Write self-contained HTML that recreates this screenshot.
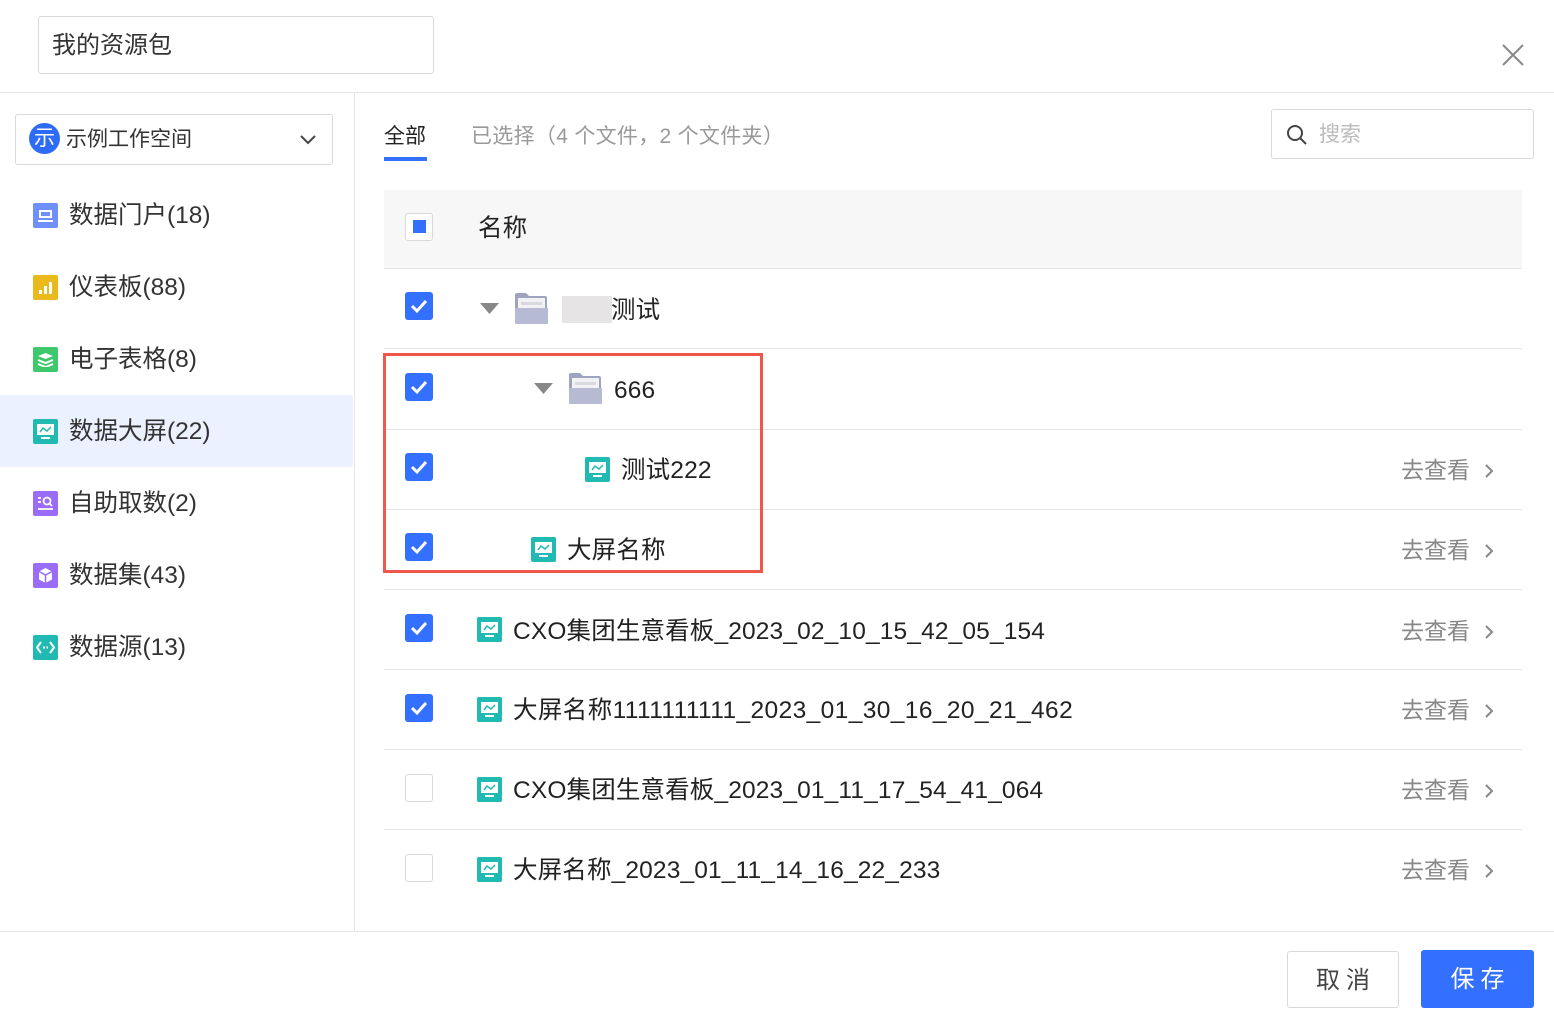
<!DOCTYPE html>
<html><head><meta charset="utf-8"><style>
*{box-sizing:border-box;margin:0;padding:0}
body{width:1554px;height:1012px;background:#fff;position:relative;overflow:hidden;font-family:"Liberation Sans","Noto Sans CJK SC",sans-serif;color:#333}
.a{position:absolute}
.hl{position:absolute;background:#e6e6e6;height:1px}
.cb{position:absolute;left:405px;width:28px;height:28px;border-radius:3px;background:#3370ff}
.cb svg{position:absolute;left:5px;top:6px}
.cbe{position:absolute;left:405px;width:28px;height:28px;border-radius:3px;border:1px solid #d9d9d9;background:#fff}
.t{position:absolute;font-size:24.5px;line-height:30px;color:#222;white-space:nowrap;letter-spacing:0.15px}
.go{position:absolute;left:1401px;font-size:23px;line-height:30px;color:#888;white-space:nowrap}
.go svg{position:absolute;left:83px;top:8px}
.ic{position:absolute;width:25px;height:25px;border-radius:2px;background:#20bab2}
.si{position:absolute;left:33px;width:25px;height:25px;border-radius:2px}
.sl{position:absolute;left:69px;font-size:24.5px;line-height:30px;color:#333}
</style></head><body>
<!-- header -->
<div class="a" style="left:38px;top:16px;width:396px;height:58px;border:1px solid #d9d9d9;border-radius:3px"></div>
<div class="a" style="left:52px;top:31px;font-size:24px;line-height:30px;color:#333">我的资源包</div>
<svg class="a" style="left:1502px;top:44px" width="22" height="22" viewBox="0 0 22 22"><path d="M1 1L21 21M21 1L1 21" stroke="#888" stroke-width="2"/></svg>
<div class="hl" style="left:0;top:92px;width:1554px"></div>
<!-- sidebar -->
<div class="a" style="left:354px;top:93px;width:1px;height:838px;background:#e6e6e6"></div>
<div class="a" style="left:15px;top:114px;width:318px;height:51px;border:1px solid #d9d9d9;border-radius:3px"></div>
<div class="a" style="left:29px;top:123px;width:31px;height:31px;border-radius:50%;background:#2f6cf6;color:#fff;font-size:21px;line-height:31px;text-align:center">示</div>
<div class="a" style="left:66px;top:126px;font-size:21px;line-height:28px;color:#333">示例工作空间</div>
<svg class="a" style="left:299px;top:133px" width="18" height="12" viewBox="0 0 18 12"><path d="M2 3L9 10L16 3" stroke="#444" stroke-width="2" fill="none"/></svg>
<div class="a" style="left:0;top:395px;width:353px;height:72px;background:#ebf1fe;border-radius:0 3px 3px 0"></div>

<div class="si" style="top:203px;background:#6f8ffd"><div class="a" style="left:6px;top:7px;width:13px;height:8px;border:2px solid #fff"></div><div class="a" style="left:5px;top:17px;width:15px;height:2px;background:#fff"></div></div>
<div class="sl" style="top:201px">数据门户(18)</div>
<div class="si" style="top:275px;background:#eab91b"><div class="a" style="left:6px;top:15px;width:3px;height:4px;background:#fff"></div><div class="a" style="left:11px;top:11px;width:3px;height:8px;background:#fff"></div><div class="a" style="left:16px;top:7px;width:3px;height:12px;background:#fff"></div></div>
<div class="sl" style="top:273px">仪表板(88)</div>
<div class="si" style="top:347px;background:#3ec86b"><svg class="a" style="left:4px;top:5px" width="17" height="15" viewBox="0 0 17 15"><path d="M1 4L8.5 1L16 4L8.5 7Z" fill="#fff"/><path d="M1 8L8.5 11L16 8M1 12L8.5 15L16 12" stroke="#fff" stroke-width="2" fill="none"/></svg></div>
<div class="sl" style="top:345px">电子表格(8)</div>
<div class="si" style="top:419px;background:#20bab2"><div class="a" style="left:4px;top:5px;width:17px;height:11px;background:#fff"></div><svg class="a" style="left:6px;top:7px" width="13" height="7"><path d="M1 6L4 2L8 5L12 1" stroke="#20bab2" stroke-width="1.5" fill="none"/></svg><div class="a" style="left:8px;top:18px;width:9px;height:2px;background:#fff"></div></div>
<div class="sl" style="top:417px">数据大屏(22)</div>
<div class="si" style="top:491px;background:#9b6cf7"><svg class="a" style="left:4px;top:4px" width="17" height="17" viewBox="0 0 17 17"><circle cx="10" cy="6" r="3.5" stroke="#fff" stroke-width="1.8" fill="none"/><path d="M12.5 8.5L15 11M1 3H4M1 7H4M1 14H16" stroke="#fff" stroke-width="1.8"/></svg></div>
<div class="sl" style="top:489px">自助取数(2)</div>
<div class="si" style="top:563px;background:#9b6cf7"><svg class="a" style="left:5px;top:4px" width="15" height="17" viewBox="0 0 15 17"><path d="M7.5 1L14 4.5V12.5L7.5 16L1 12.5V4.5Z" fill="#fff"/><path d="M1 4.5L7.5 8L14 4.5M7.5 8V16" stroke="#9b6cf7" stroke-width="1.5" fill="none"/></svg></div>
<div class="sl" style="top:561px">数据集(43)</div>
<div class="si" style="top:635px;background:#20bab2"><svg class="a" style="left:3px;top:6px" width="19" height="13" viewBox="0 0 19 13"><path d="M5 1L1 6.5L5 12M14 1L18 6.5L14 12" stroke="#fff" stroke-width="2" fill="none"/><path d="M7 6.5H12" stroke="#fff" stroke-width="2" stroke-dasharray="2 1.5"/></svg></div>
<div class="sl" style="top:633px">数据源(13)</div>

<!-- tabs -->
<div class="a" style="left:384px;top:123px;font-size:21px;line-height:28px;color:#222">全部</div>
<div class="a" style="left:384px;top:157px;width:43px;height:4px;background:#3370ff"></div>
<div class="a" style="left:471px;top:123px;font-size:21px;line-height:28px;color:#999;letter-spacing:0.3px">已选择（4 个文件，2 个文件夹）</div>
<div class="a" style="left:1271px;top:109px;width:263px;height:50px;border:1px solid #d9d9d9;border-radius:3px"></div>
<svg class="a" style="left:1286px;top:124px" width="22" height="22" viewBox="0 0 22 22"><circle cx="9" cy="9" r="7" stroke="#444" stroke-width="2" fill="none"/><path d="M14 14L20 20" stroke="#444" stroke-width="2"/></svg>
<div class="a" style="left:1319px;top:121px;font-size:21px;line-height:28px;color:#bbb">搜索</div>

<!-- table -->
<div class="a" style="left:384px;top:190px;width:1138px;height:78px;background:#f7f7f7"></div>
<div class="cbe" style="top:213px"></div><div class="a" style="left:413px;top:220px;width:13px;height:13px;background:#3370ff"></div>
<div class="t" style="left:478px;top:214px">名称</div>
<div class="hl" style="left:384px;top:268px;width:1138px"></div>
<div class="hl" style="left:384px;top:348px;width:1138px"></div>
<div class="hl" style="left:384px;top:429px;width:1138px"></div>
<div class="hl" style="left:384px;top:509px;width:1138px"></div>
<div class="hl" style="left:384px;top:589px;width:1138px"></div>
<div class="hl" style="left:384px;top:669px;width:1138px"></div>
<div class="hl" style="left:384px;top:749px;width:1138px"></div>
<div class="hl" style="left:384px;top:829px;width:1138px"></div>

<!-- checkboxes -->
<div class="cb" style="top:292px"><svg width="18" height="16"><path d="M2 8L7 13L16 3" stroke="#fff" stroke-width="3" fill="none"/></svg></div>
<div class="cb" style="top:373px"><svg width="18" height="16"><path d="M2 8L7 13L16 3" stroke="#fff" stroke-width="3" fill="none"/></svg></div>
<div class="cb" style="top:453px"><svg width="18" height="16"><path d="M2 8L7 13L16 3" stroke="#fff" stroke-width="3" fill="none"/></svg></div>
<div class="cb" style="top:533px"><svg width="18" height="16"><path d="M2 8L7 13L16 3" stroke="#fff" stroke-width="3" fill="none"/></svg></div>
<div class="cb" style="top:614px"><svg width="18" height="16"><path d="M2 8L7 13L16 3" stroke="#fff" stroke-width="3" fill="none"/></svg></div>
<div class="cb" style="top:694px"><svg width="18" height="16"><path d="M2 8L7 13L16 3" stroke="#fff" stroke-width="3" fill="none"/></svg></div>
<div class="cbe" style="top:774px"></div>
<div class="cbe" style="top:854px"></div>

<!-- row1 folder -->
<svg class="a" style="left:480px;top:303px" width="19" height="11"><path d="M0 0H19L9.5 11Z" fill="#888"/></svg>
<svg class="a" style="left:514px;top:292px" width="35" height="33" viewBox="0 0 35 33"><path d="M1 3Q1 1 3 1H12L15 4H31Q33 4 33 6V31H1Z" fill="#9fa3bd"/><rect x="4" y="6" width="27" height="18" fill="#f2f2f4"/><rect x="7" y="10" width="21" height="3" fill="#d8d8de"/><path d="M1 16H34V31Q34 32 33 32H2Q1 32 1 31Z" fill="#b7bad3"/></svg>
<div class="a" style="left:562px;top:296px;width:50px;height:27px;background:#e6e4e4"></div>
<div class="t" style="left:611px;top:296px">测试</div>

<!-- row2 -->
<svg class="a" style="left:534px;top:383px" width="19" height="11"><path d="M0 0H19L9.5 11Z" fill="#888"/></svg>
<svg class="a" style="left:568px;top:372px" width="35" height="33" viewBox="0 0 35 33"><path d="M1 3Q1 1 3 1H12L15 4H31Q33 4 33 6V31H1Z" fill="#9fa3bd"/><rect x="4" y="6" width="27" height="18" fill="#f2f2f4"/><rect x="7" y="10" width="21" height="3" fill="#d8d8de"/><path d="M1 16H34V31Q34 32 33 32H2Q1 32 1 31Z" fill="#b7bad3"/></svg>
<div class="t" style="left:614px;top:376px">666</div>

<!-- screen icons -->
<div class="ic" style="left:585px;top:457px"><div class="a" style="left:4px;top:5px;width:17px;height:11px;background:#fff"></div><svg class="a" style="left:6px;top:7px" width="13" height="7"><path d="M1 6L4 2L8 5L12 1" stroke="#20bab2" stroke-width="1.5" fill="none"/></svg><div class="a" style="left:8px;top:18px;width:9px;height:2px;background:#fff"></div></div>
<div class="t" style="left:621px;top:456px">测试222</div>
<div class="ic" style="left:531px;top:537px"><div class="a" style="left:4px;top:5px;width:17px;height:11px;background:#fff"></div><svg class="a" style="left:6px;top:7px" width="13" height="7"><path d="M1 6L4 2L8 5L12 1" stroke="#20bab2" stroke-width="1.5" fill="none"/></svg><div class="a" style="left:8px;top:18px;width:9px;height:2px;background:#fff"></div></div>
<div class="t" style="left:567px;top:536px">大屏名称</div>

<div class="ic" style="left:477px;top:617px"><div class="a" style="left:4px;top:5px;width:17px;height:11px;background:#fff"></div><svg class="a" style="left:6px;top:7px" width="13" height="7"><path d="M1 6L4 2L8 5L12 1" stroke="#20bab2" stroke-width="1.5" fill="none"/></svg><div class="a" style="left:8px;top:18px;width:9px;height:2px;background:#fff"></div></div>
<div class="t" style="left:513px;top:617px">CXO集团生意看板_2023_02_10_15_42_05_154</div>
<div class="ic" style="left:477px;top:697px"><div class="a" style="left:4px;top:5px;width:17px;height:11px;background:#fff"></div><svg class="a" style="left:6px;top:7px" width="13" height="7"><path d="M1 6L4 2L8 5L12 1" stroke="#20bab2" stroke-width="1.5" fill="none"/></svg><div class="a" style="left:8px;top:18px;width:9px;height:2px;background:#fff"></div></div>
<div class="t" style="left:513px;top:696px;letter-spacing:0.4px">大屏名称1111111111_2023_01_30_16_20_21_462</div>
<div class="ic" style="left:477px;top:777px"><div class="a" style="left:4px;top:5px;width:17px;height:11px;background:#fff"></div><svg class="a" style="left:6px;top:7px" width="13" height="7"><path d="M1 6L4 2L8 5L12 1" stroke="#20bab2" stroke-width="1.5" fill="none"/></svg><div class="a" style="left:8px;top:18px;width:9px;height:2px;background:#fff"></div></div>
<div class="t" style="left:513px;top:776px">CXO集团生意看板_2023_01_11_17_54_41_064</div>
<div class="ic" style="left:477px;top:857px"><div class="a" style="left:4px;top:5px;width:17px;height:11px;background:#fff"></div><svg class="a" style="left:6px;top:7px" width="13" height="7"><path d="M1 6L4 2L8 5L12 1" stroke="#20bab2" stroke-width="1.5" fill="none"/></svg><div class="a" style="left:8px;top:18px;width:9px;height:2px;background:#fff"></div></div>
<div class="t" style="left:513px;top:856px">大屏名称_2023_01_11_14_16_22_233</div>

<!-- go links -->
<div class="go" style="top:455px">去查看<svg width="10" height="16"><path d="M2 2L8 8L2 14" stroke="#888" stroke-width="2" fill="none"/></svg></div>
<div class="go" style="top:535px">去查看<svg width="10" height="16"><path d="M2 2L8 8L2 14" stroke="#888" stroke-width="2" fill="none"/></svg></div>
<div class="go" style="top:616px">去查看<svg width="10" height="16"><path d="M2 2L8 8L2 14" stroke="#888" stroke-width="2" fill="none"/></svg></div>
<div class="go" style="top:695px">去查看<svg width="10" height="16"><path d="M2 2L8 8L2 14" stroke="#888" stroke-width="2" fill="none"/></svg></div>
<div class="go" style="top:775px">去查看<svg width="10" height="16"><path d="M2 2L8 8L2 14" stroke="#888" stroke-width="2" fill="none"/></svg></div>
<div class="go" style="top:855px">去查看<svg width="10" height="16"><path d="M2 2L8 8L2 14" stroke="#888" stroke-width="2" fill="none"/></svg></div>

<!-- red box -->
<div class="a" style="left:383px;top:353px;width:380px;height:220px;border:3px solid #f0574a"></div>

<!-- footer -->
<div class="hl" style="left:0;top:931px;width:1554px"></div>
<div class="a" style="left:1287px;top:951px;width:112px;height:57px;border:1px solid #d9d9d9;border-radius:3px;font-size:24px;line-height:57px;text-align:center;color:#444;letter-spacing:6px;padding-left:6px">取消</div>
<div class="a" style="left:1421px;top:950px;width:113px;height:58px;background:#3370ff;border-radius:3px;font-size:24px;line-height:60px;text-align:center;color:#fff;letter-spacing:6px;padding-left:6px">保存</div>
</body></html>
